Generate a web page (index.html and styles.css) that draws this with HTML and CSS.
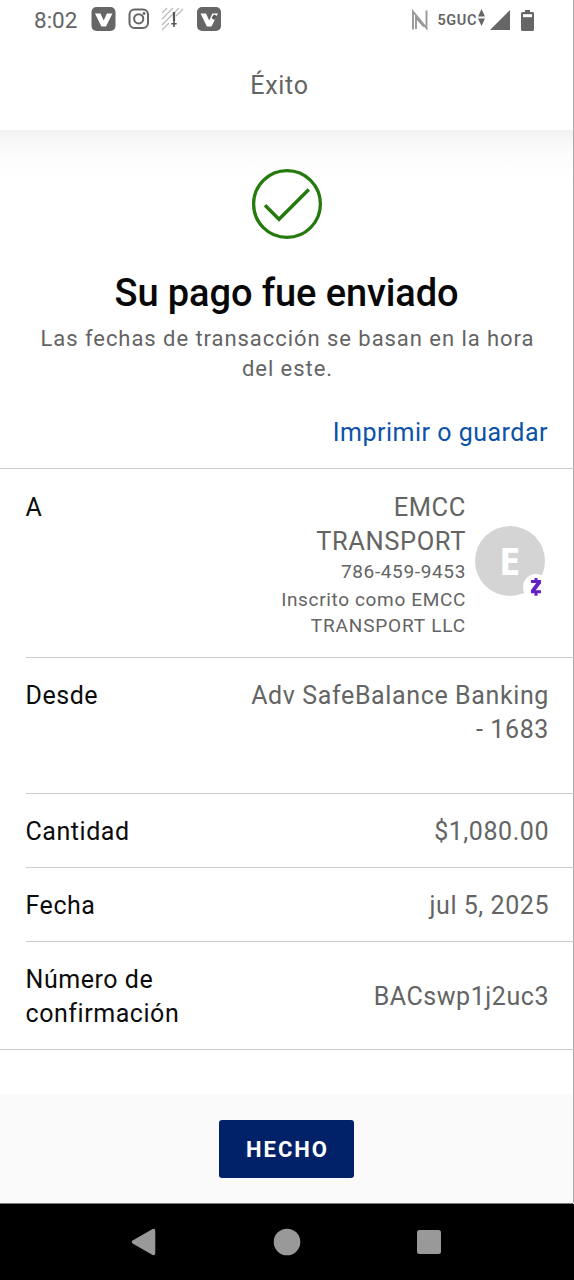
FILE: index.html
```html
<!DOCTYPE html>
<html lang="es">
<head>
<meta charset="utf-8">
<title>Éxito</title>
<link rel="stylesheet" href="styles.css">
</head>
<body>
<div class="screen">
  <header class="header">
    <div class="status">
      <span class="clock">8:02</span>
      <svg class="status-left" width="132" height="28" viewBox="0 0 132 28">
        <rect x="1.500" y="1" width="24" height="24" rx="5" fill="#666"/>
        <path d="M5 7.500h5.500l3.200 7 3.200-7h5.500l-6.400 13h-4.600z" fill="#fff"/>
        <g fill="none" stroke="#666" stroke-width="2">
          <rect x="39.500" y="3.500" width="18.500" height="18.500" rx="5"/>
          <circle cx="48.700" cy="12.800" r="4.600"/>
        </g>
        <circle cx="54" cy="7.500" r="1.400" fill="#666"/>
        <path d="M72 7l5-5M72 13l11-11M72 19l17-17M72 24l7-7M86 10l7-7" stroke="#bbb" stroke-width="1.300"/>
        <path d="M84 6v9" stroke="#555" stroke-width="2.200"/>
        <path d="M84 15v6M81.300 17.800h5.400" stroke="#555" stroke-width="1.600"/>
        <rect x="107" y="1" width="24" height="24" rx="5" fill="#666"/>
        <path d="M110.500 7.500h5.500l3.200 7 3.200-7h5.500l-6.400 13h-4.600z" fill="#fff"/>
        <path d="M121.500 12l2.500-3.500 3 1.500-2.500 4z" fill="#555"/>
      </svg>
      <div class="status-right">
        <svg width="18" height="22" viewBox="0 0 18 22"><path d="M2 20.500V2.500L15.500 19V1.500M5 20V8.500l8 9" fill="none" stroke="#999" stroke-width="1.900"/></svg>
        <span class="network">5GUC</span>
        <svg class="arrows" width="7" height="18" viewBox="0 0 7 18"><path d="M3.500 0L7 7.500H0zM3.500 17L7 9.500H0z" fill="#666"/></svg>
        <svg class="signal" width="20" height="20" viewBox="0 0 20 20"><path d="M20 0v20H0z" fill="#666"/></svg>
        <svg class="battery" width="13" height="21" viewBox="0 0 13 21"><path d="M4 0h5v2h2.500A1.500 1.500 0 0 1 13 3.500v16A1.500 1.500 0 0 1 11.500 21h-10A1.500 1.500 0 0 1 0 19.500v-16A1.500 1.500 0 0 1 1.500 2H4z" fill="#666"/><path d="M2 4.200h9v3H2z" fill="#fff"/></svg>
      </div>
    </div>
    <div class="header-title"><span>Éxito</span></div>
  </header>
  <main class="content">
    <section class="hero">
      <svg class="check" width="72" height="72" viewBox="0 0 72 72" fill="none" stroke="#257a0e"><circle cx="36" cy="36" r="33.400" stroke-width="3.300"/><path d="M14 37.300l14 14L57.800 21.500" stroke-width="3.400"/></svg>
      <h1 class="title">Su pago fue enviado</h1>
      <p class="subtitle">Las fechas de transacción se basan en la hora<br>del este.</p>
      <a class="print">Imprimir o guardar</a>
    </section>
    <section class="details">
      <div class="row row-to">
        <span class="label">A</span>
        <div class="payee">
          <div class="payee-text">
            <div class="value payee-name">EMCC<br>TRANSPORT</div>
            <div class="phone">786-459-9453</div>
            <div class="registered">Inscrito como EMCC<br><span class="legal">TRANSPORT LLC</span></div>
          </div>
          <div class="avatar"><span>E</span>
            <svg class="badge" width="26" height="26" viewBox="0 0 26 26"><circle cx="13" cy="13" r="13" fill="#fff"/><path d="M8 6h10v3.200l-5.300 7.100H18v3H8v-3.200L13.300 9H8zM11.500 4h3v3h-3zM11.500 18.500h3v3.300h-3z" fill="#6420c4"/></svg>
          </div>
        </div>
      </div>
      <div class="row row-from"><span class="label">Desde</span><span class="value account">Adv SafeBalance Banking<br>- 1683</span></div>
      <div class="row row-single"><span class="label">Cantidad</span><span class="value amount">$1,080.00</span></div>
      <div class="row row-single"><span class="label">Fecha</span><span class="value date">jul 5, 2025</span></div>
      <div class="row row-confirm"><span class="label">Número de<br>confirmación</span><span class="value code">BACswp1j2uc3</span></div>
    </section>
  </main>
  <footer class="footer"><button class="done"><span>HECHO</span></button></footer>
  <nav class="navbar">
    <svg width="26" height="28" viewBox="0 0 26 28"><path d="M2.500 14L22.500 2.500v23z" fill="#999" stroke="#999" stroke-width="3.500" stroke-linejoin="round"/></svg>
    <svg width="28" height="28" viewBox="0 0 28 28"><circle cx="14" cy="14" r="13.300" fill="#999"/></svg>
    <svg width="24" height="24" viewBox="0 0 24 24"><rect width="24" height="24" rx="2.500" fill="#999"/></svg>
  </nav>
</div>
</body>
</html>
```
FILE: styles.css
```css
* { box-sizing: border-box; }
body { margin: 0; background: #fff; font-family: Roboto, "Liberation Sans", sans-serif; color: #646464; }
.screen { width: 574px; height: 1280px; display: flex; flex-direction: column; overflow: hidden; background: linear-gradient(#aaa, #aaa) right top / 1px 1203px no-repeat #fff; }
svg { display: block; flex: none; }
.header { height: 130px; flex: none; margin-right: 1px; background: #fff; }
.status { height: 40px; display: flex; align-items: center; padding: 0 38px 0 34px; }
.clock { font-size: 22.500px; line-height: 40px; width: 56px; white-space: nowrap; }
.status-right { margin-left: auto; display: flex; align-items: center; }
.network { font-size: 14.500px; font-weight: 600; letter-spacing: .6px; margin-left: 8px; line-height: 20px; padding-top: 2px; }
.arrows { margin: -5px 0 0 1px; }
.signal { margin-left: 5px; }
.battery { margin-left: 11px; margin-right: 1px; }
.header-title { height: 90px; display: flex; align-items: center; justify-content: center; font-size: 25px; letter-spacing: .7px; padding-right: 14px; }
.content { flex: 1; min-height: 0; }
.hero { height: 338px; margin-right: 1px; display: flex; flex-direction: column; align-items: center; padding-top: 38px; background: linear-gradient(#f1f1f1, #f6f6f6 7px, #fafafa 18px, #fdfdfd 34px, #fff 50px); }
.title { margin: 31px 0 0; font-size: 38px; line-height: 44px; font-weight: 500; color: #080808; letter-spacing: -.1px; white-space: nowrap; }
.subtitle { margin: 9px 0 0 2px; font-size: 22px; line-height: 29.500px; letter-spacing: .95px; text-align: center; white-space: nowrap; }
.print { align-self: flex-end; margin: 35px 25px 0 0; font-size: 25px; line-height: 30px; letter-spacing: .5px; color: #0b52a8; white-space: nowrap; }
.details { border-top: 1.500px solid #ccc; border-bottom: 1.500px solid #ccc; height: 582px; }
.row { margin-left: 26px; padding-right: 25px; display: flex; justify-content: space-between; align-items: flex-start; border-bottom: 1.500px solid #ccc; font-size: 25px; line-height: 33.500px; letter-spacing: .55px; white-space: nowrap; }
.row:last-child { border-bottom: 0; }
.label { color: #0c0c0c; margin-left: -.5px; }
.value { text-align: right; }
.account { letter-spacing: .62px; }
.row-to { height: 189px; padding-top: 22px; padding-right: 29px; }
.payee { display: flex; gap: 9px; }
.payee-text { text-align: right; font-size: 19px; line-height: 26px; letter-spacing: .65px; }
.payee-name { font-size: 25.500px; line-height: 33.500px; letter-spacing: .6px; height: 66px; }
.phone { line-height: 30px; }
.legal { letter-spacing: .85px; }
.avatar { position: relative; width: 70px; height: 70px; margin-top: 35px; border-radius: 50%; background: #d4d4d4; display: flex; align-items: center; justify-content: center; color: #fff; font: 700 38px/68px "Open Sans", sans-serif; }
.avatar > span { padding-bottom: 2px; }
.badge { position: absolute; right: -4px; bottom: -4px; }
.row-from { height: 136px; padding-top: 21px; }
.row-single { height: 74px; align-items: center; padding-top: 2px; }
.row-confirm { height: 107px; align-items: center; padding-top: 2px; }
.footer { height: 110px; flex: none; margin-right: 1px; background: #fafafa; border-bottom: 1px solid #777; display: flex; justify-content: center; align-items: flex-start; padding-top: 26px; }
.done { width: 135px; height: 58px; border: 0; padding: 2px 0 0 2px; border-radius: 3px; background: #012169; color: #fff; font: 700 22px/56px Roboto, sans-serif; letter-spacing: 2px; }
.navbar { height: 76px; flex: none; background: #000; display: flex; align-items: center; padding-left: 131px; gap: 116px; }
```
